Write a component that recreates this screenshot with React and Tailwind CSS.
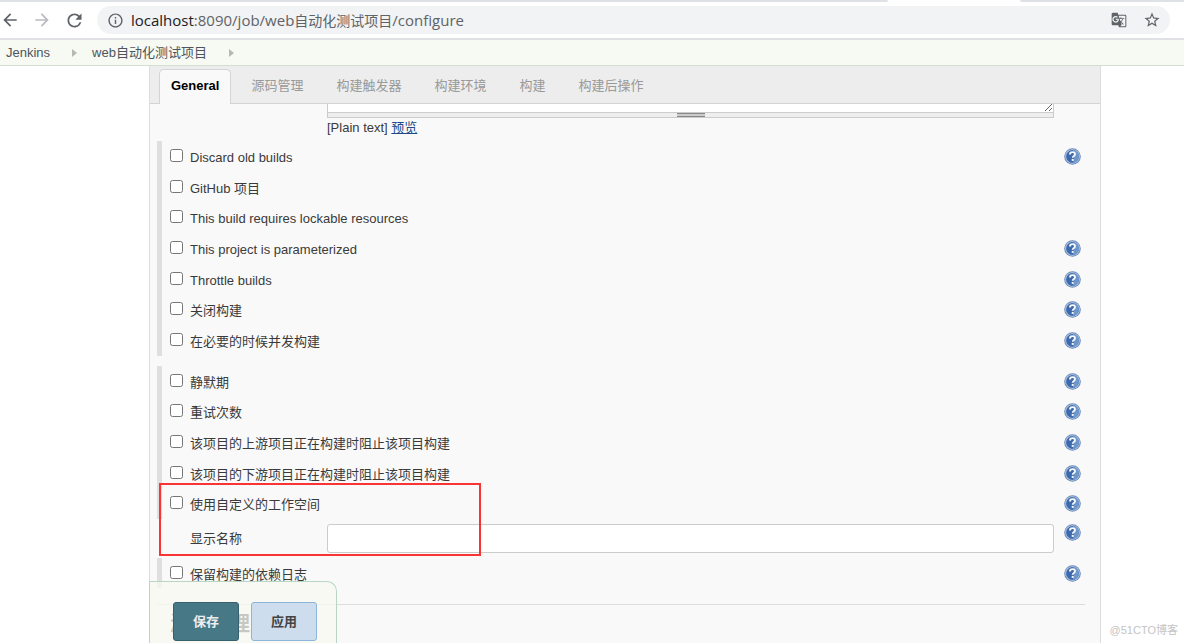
import React, { useState } from "react";
import {
  MdArrowBack,
  MdArrowForward,
  MdGTranslate,
  MdInfoOutline,
  MdRefresh,
  MdStarBorder,
} from "react-icons/md";

const TABS = ["General", "源码管理", "构建触发器", "构建环境", "构建", "构建后操作"];

const GENERAL_OPTIONS = [
  { id: "discard", label: "Discard old builds", help: true },
  { id: "github", label: "GitHub 项目", help: false },
  { id: "lockable", label: "This build requires lockable resources", help: false },
  { id: "params", label: "This project is parameterized", help: true },
  { id: "throttle", label: "Throttle builds", help: true },
  { id: "disable", label: "关闭构建", help: true },
  { id: "concurrent", label: "在必要的时候并发构建", help: true },
];

const ADVANCED_OPTIONS = [
  { id: "quiet", label: "静默期", help: true },
  { id: "retry", label: "重试次数", help: true },
  { id: "upstream", label: "该项目的上游项目正在构建时阻止该项目构建", help: true },
  { id: "downstream", label: "该项目的下游项目正在构建时阻止该项目构建", help: true },
  { id: "workspace", label: "使用自定义的工作空间", help: true },
];

const LOG_OPTIONS = [{ id: "keeplogs", label: "保留构建的依赖日志", help: true }];

function HelpButton({ label }) {
  return (
    <button type="button" aria-label={"Help: " + label} className="shrink-0">
      <svg width="17" height="17" viewBox="0 0 17 17" className="block">
        <circle cx="8.5" cy="8.5" r="8.3" fill="#6a8bbb" />
        <circle cx="8.5" cy="8.5" r="7.3" fill="#b7c9e2" />
        <circle cx="8.5" cy="8.5" r="6.4" fill="#3c6aac" />
        <path d="M8.5 2.1a6.4 6.4 0 0 1 0 12.8c2.4-3.6 2.4-9.2 0-12.8z" fill="#6f97cc" />
        <path
          d="M6 6.4c0-1.5 1.1-2.3 2.5-2.3s2.5.8 2.5 2.1c0 1.6-2.3 1.8-2.3 3.5"
          fill="none"
          stroke="#f7f9fc"
          strokeWidth="1.9"
        />
        <rect x="7.7" y="10.9" width="2" height="2" fill="#f7f9fc" />
      </svg>
    </button>
  );
}

function OptionRow({ option, checked, onToggle }) {
  return (
    <div className="flex min-h-[30px] items-center justify-between">
      <div className="flex items-center">
        <input
          id={option.id}
          type="checkbox"
          className="mb-[2px] size-[13px]"
          checked={checked}
          onChange={() => onToggle(option.id)}
        />
        <label htmlFor={option.id} className="pt-[2px] pl-[7px]">
          {option.label}
        </label>
      </div>
      {option.help && <HelpButton label={option.label} />}
    </div>
  );
}

function AddressBar() {
  return (
    <header className="border-b-2 border-[#dfe1e5] bg-white">
      {/* bottom edge of the tab strip, open under the active tab */}
      <div className="flex h-[2px] justify-between">
        <div className="w-3/4 rounded-br bg-[#dee1e6]" />
        <div className="w-[164px] rounded-bl bg-[#dee1e6]" />
      </div>
      <div className="flex h-9 items-center pr-[14px] text-[#5f6368]">
        <button type="button" aria-label="Back" className="w-8">
          <MdArrowBack size={20} />
        </button>
        <button type="button" aria-label="Forward" className="w-8 text-[#b9bbbe]">
          <MdArrowForward size={20} />
        </button>
        <button type="button" aria-label="Reload" className="w-[33px]">
          <MdRefresh size={21} />
        </button>
        <div className="flex h-7 flex-1 items-center rounded-full bg-[#f1f3f4] pr-[9px] pl-[10px]">
          <MdInfoOutline size={17} />
          <p className="ml-[7px] flex-1 font-['Open_Sans','Noto_Sans_CJK_SC',sans-serif] text-[15px] leading-5">
            <span className="text-[#202124]">localhost</span>:8090/job/web
            <span className="text-[14px]">自动化测试项目</span>/configure
          </p>
          <button type="button" aria-label="Translate" className="mr-4">
            <MdGTranslate size={16} />
          </button>
          <button type="button" aria-label="Bookmark">
            <MdStarBorder size={18} />
          </button>
        </div>
      </div>
    </header>
  );
}

function Crumb({ children }) {
  return (
    <li className="flex items-center">
      <a href="#" className="text-[#4d545d]">
        {children}
      </a>
      <svg width="5" height="8" viewBox="0 0 5 8" className="mr-[15px] ml-[22px]">
        <path d="M0 0l5 4-5 4z" fill="#b5b9b2" />
      </svg>
    </li>
  );
}

export default function App() {
  const [active, setActive] = useState("General");
  const [checked, setChecked] = useState({});
  const [displayName, setDisplayName] = useState("");

  const toggle = (id) => setChecked((prev) => ({ ...prev, [id]: !prev[id] }));

  const renderRows = (options) =>
    options.map((o) => (
      <OptionRow key={o.id} option={o} checked={!!checked[o.id]} onToggle={toggle} />
    ));

  return (
    <div className="relative flex h-screen flex-col overflow-hidden bg-white font-['Liberation_Sans','Noto_Sans_CJK_SC',sans-serif] text-[13px] leading-[19px] text-[#3a3a3a]">
      <AddressBar />

      <nav className="border-b border-[#d8ddd2] bg-[#f6faf2]">
        <ol className="flex h-[25px] items-center pl-[6px]">
          <Crumb>Jenkins</Crumb>
          <Crumb>web自动化测试项目</Crumb>
        </ol>
      </nav>

      <main className="relative mr-[83px] ml-[149px] flex-1 border-x border-[#dcdcdc] bg-[#f9f9f9]">
        <div className="flex h-[38px] items-end border-b border-[#d4d4d4] bg-[#ededed] pl-[9px]">
          {TABS.map((tab) => (
            <button
              key={tab}
              type="button"
              onClick={() => setActive(tab)}
              className={
                tab === active
                  ? "-mb-px mr-[10px] h-[35px] rounded-t-[5px] border border-b-0 border-[#d4d4d4] bg-[#f9f9f9] px-[11px] pb-[3px] font-bold text-black"
                  : "h-[35px] px-[10px] mr-[13px] text-[#999]"
              }
            >
              {tab}
            </button>
          ))}
        </div>

        <form className="pr-[19px] pl-[7px]" onSubmit={(e) => e.preventDefault()}>
          <div className="mr-[27px] ml-[170px]">
            <div className="flex h-[9px] flex-col justify-end overflow-hidden">
              <textarea
                aria-label="描述"
                className="block h-12 w-full shrink-0 resize-y border border-[#ccc] bg-white"
              />
            </div>
            {/* drag handle */}
            <div className="flex h-[5px] items-center justify-center border border-t-0 border-[#ccc] bg-[#eee]">
              <div className="h-[4px] w-7 border-y border-[#888] bg-[#ccc]" />
            </div>
            <p>
              [Plain text]{" "}
              <a href="#" className="text-[#204a87] underline">
                预览
              </a>
            </p>
          </div>

          <section className="mt-1 grid min-h-[215px] border-l-[5px] border-[#dfdfdf] pl-2">
            {renderRows(GENERAL_OPTIONS)}
          </section>

          <div className="relative mt-[10px]">
            <section className="grid min-h-[153px] border-l-[5px] border-[#dfdfdf] pl-2">
              {renderRows(ADVANCED_OPTIONS)}
            </section>
            <div className="flex items-start pt-[5px] pb-[5px] pl-[33px]">
              <label htmlFor="displayName" className="w-[137px] pt-[5px]">
                显示名称
              </label>
              <input
                id="displayName"
                type="text"
                value={displayName}
                onChange={(e) => setDisplayName(e.target.value)}
                className="mr-[10px] h-[29px] min-w-0 flex-1 rounded-[3px] border border-[#ccc] bg-white px-2"
              />
              <HelpButton label="显示名称" />
            </div>
            <div className="pointer-events-none absolute bottom-[2px] left-[2px] h-[73px] w-[322px] border-2 border-[#f83434]" />
          </div>

          <section className="grid border-l-[5px] border-[#dfdfdf] pl-2">
            {renderRows(LOG_OPTIONS)}
          </section>

          <hr className="mt-4 -mr-1 border-[#ddd]" />
          <h2 className="mt-[5px] pl-[13px] text-[20px] leading-7 font-bold">源码管理</h2>
        </form>

        <div className="absolute bottom-0 -left-px flex h-[62px] items-end gap-3 rounded-tr-[10px] border border-b-0 border-[#b9d5c4] bg-[#f6f8ef]/75 pr-[19px] pb-[2px] pl-[23px]">
          <button
            type="button"
            className="h-[39px] w-[66px] rounded-[3px] border border-[#35616f] bg-[#467886] font-bold text-[#eee]"
          >
            保存
          </button>
          <button
            type="button"
            className="h-[39px] w-[66px] rounded-[3px] border border-[#8cb4dc] bg-[#cddded] font-bold text-[#444]"
          >
            应用
          </button>
        </div>
      </main>

      <p className="absolute right-[6px] bottom-[3px] text-[11px] text-[#c4c4c4]">@51CTO博客</p>
    </div>
  );
}
